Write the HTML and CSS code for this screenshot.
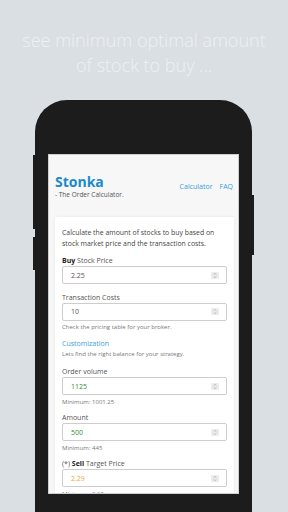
FILE: index.html
```html
<!DOCTYPE html>
<html>
<head>
  <title>Stonka - The Order Calculator</title>
  <link rel="stylesheet" href="styles.css">
</head>
<body>
  <h1 class="caption">see minimum optimal amount<br>of stock to buy ...</h1>
  <div class="phone">
    <span class="btn btn-a"></span>
    <span class="btn btn-b"></span>
    <span class="btn btn-c"></span>
    <div class="screen">
      <header class="top">
        <div class="brand">
          <div class="logo">Stonka</div>
          <div class="tagline">- The Order Calculator.</div>
        </div>
        <nav class="nav">
          <a href="#">Calculator</a>
          <a href="#">FAQ</a>
        </nav>
      </header>

      <form class="card">
        <p class="intro">Calculate the amount of stocks to buy based on stock market price and the transaction costs.</p>

        <div class="field field-plain">
          <label><b>Buy</b> Stock Price</label>
          <div class="input"><span>2.25</span><svg class="spin" viewBox="0 0 8 7"><rect width="8" height="7" rx="1" fill="#ececec"/><path d="M2.6 2.6 4 1.4 5.4 2.6M2.6 4.4 4 5.6 5.4 4.4" fill="none" stroke="#9a9a9a" stroke-width=".6"/></svg></div>
        </div>

        <div class="field">
          <label>Transaction Costs</label>
          <div class="input"><span>10</span><svg class="spin" viewBox="0 0 8 7"><rect width="8" height="7" rx="1" fill="#ececec"/><path d="M2.6 2.6 4 1.4 5.4 2.6M2.6 4.4 4 5.6 5.4 4.4" fill="none" stroke="#9a9a9a" stroke-width=".6"/></svg></div>
          <div class="help">Check the pricing table for your broker.</div>
        </div>

        <div class="section">
          <h2>Customization</h2>
          <div class="help">Lets find the right balance for your strategy.</div>
        </div>

        <div class="field">
          <label>Order volume</label>
          <div class="input green"><span>1125</span><svg class="spin" viewBox="0 0 8 7"><rect width="8" height="7" rx="1" fill="#ececec"/><path d="M2.6 2.6 4 1.4 5.4 2.6M2.6 4.4 4 5.6 5.4 4.4" fill="none" stroke="#9a9a9a" stroke-width=".6"/></svg></div>
          <div class="help">Minimum: 1001.25</div>
        </div>

        <div class="field">
          <label>Amount</label>
          <div class="input green"><span>500</span><svg class="spin" viewBox="0 0 8 7"><rect width="8" height="7" rx="1" fill="#ececec"/><path d="M2.6 2.6 4 1.4 5.4 2.6M2.6 4.4 4 5.6 5.4 4.4" fill="none" stroke="#9a9a9a" stroke-width=".6"/></svg></div>
          <div class="help">Minimum: 445</div>
        </div>

        <div class="field">
          <label>(*) <b>Sell</b> Target Price</label>
          <div class="input orange"><span>2.29</span><svg class="spin" viewBox="0 0 8 7"><rect width="8" height="7" rx="1" fill="#ececec"/><path d="M2.6 2.6 4 1.4 5.4 2.6M2.6 4.4 4 5.6 5.4 4.4" fill="none" stroke="#9a9a9a" stroke-width=".6"/></svg></div>
          <div class="help">Minimum: 2.29</div>
        </div>
      </form>
    </div>
  </div>
</body>
</html>
```

FILE: styles.css
```css
body {
  margin: 0;
  width: 288px;
  height: 512px;
  overflow: hidden;
  background: #d9dfe2;
  font-family: "Open Sans", "Noto Sans", sans-serif;
}
.caption {
  margin: 0;
  padding-top: 28px;
  text-align: center;
  color: #eef1f3;
  font-size: 18px;
  line-height: 25px;
  font-weight: 300;
}
.phone {
  position: relative;
  box-sizing: border-box;
  margin: 22px 36px 0 35px;
  height: 412px;
  padding: 54px 13px 0 13px;
  background: #1c1c1c;
  border-radius: 32px 32px 0 0;
}
.btn {
  position: absolute;
  width: 2px;
  background: #1c1c1c;
}
.btn-a {
  left: -2px;
  top: 55px;
  height: 74px;
}
.btn-b {
  left: -2px;
  top: 137px;
  height: 33px;
}
.btn-c {
  right: -2px;
  top: 95px;
  height: 60px;
}
.screen {
  height: 338px;
  overflow: hidden;
  background: #f7f7f7;
  border: 1px solid #cfcfcf;
}
.top {
  display: flex;
  justify-content: space-between;
  align-items: flex-start;
  padding: 19px 5px 0 6px;
}
.logo {
  color: #1b8bc8;
  font-size: 14px;
  line-height: 16px;
  font-weight: bold;
}
.tagline {
  color: #555;
  font-size: 6.5px;
  line-height: 9px;
}
.nav {
  display: flex;
  gap: 7px;
  padding-top: 7.5px;
}
.nav a {
  color: #3a9dd4;
  font-size: 7px;
  line-height: 9px;
  text-decoration: none;
}
.card {
  margin: 18px 4px 0 6px;
  padding: 9.5px 7px 10px 7px;
  background: #fff;
  box-shadow: 0 0 3px rgba(0, 0, 0, 0.08);
}
.intro {
  margin: 0 0 6.5px;
  color: #444;
  font-size: 6.9px;
  line-height: 11px;
}
.field {
  margin-bottom: 5.5px;
}
.field-plain {
  margin-bottom: 7.5px;
}
label {
  display: block;
  color: #555;
  font-size: 7px;
  line-height: 11px;
}
label b {
  color: #222;
}
.input {
  display: flex;
  justify-content: space-between;
  align-items: center;
  box-sizing: border-box;
  height: 18px;
  padding: 0 7px 0 8px;
  border: 1px solid #cdcdcd;
  border-radius: 2px;
  color: #555;
  font-size: 7px;
}
.green {
  color: #2f8f3b;
}
.orange {
  color: #f2a33f;
}
.spin {
  width: 8px;
  height: 7px;
}
.help {
  margin-top: 1.5px;
  color: #777;
  font-size: 6px;
  line-height: 10px;
}
.section {
  margin-bottom: 7.5px;
}
.section h2 {
  margin: 0;
  color: #3aa0d6;
  font-size: 7px;
  line-height: 11px;
  font-weight: normal;
}
.section .help {
  margin-top: 0;
}
```
